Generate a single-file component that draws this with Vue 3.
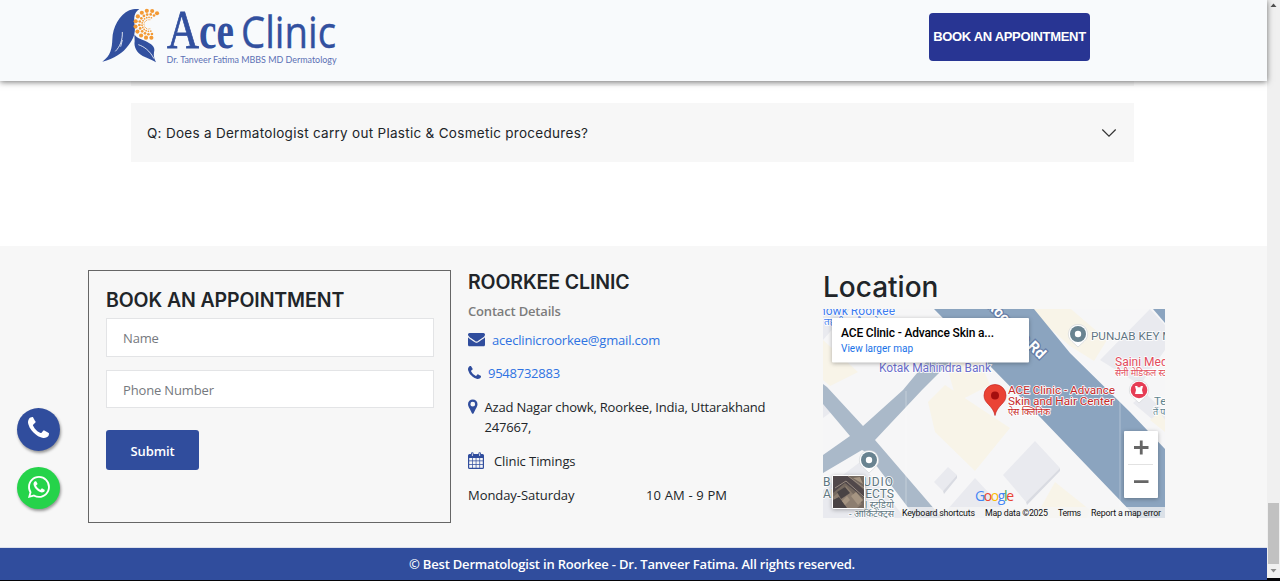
<script setup>
const ring = (count, cx, cy, radius, size, from, to) =>
  Array.from({ length: count }, (_, i) => {
    const a = ((from + ((to - from) * i) / (count - 1)) * Math.PI) / 180
    return { x: cx + radius * Math.cos(a), y: cy + radius * Math.sin(a), r: size }
  })

const dots = [
  ...ring(11, 177, 73, 41, 6.2, -54, -280),
  ...ring(12, 178, 73, 30, 4, -62, -285),
  ...ring(12, 177, 73, 21, 2.6, -70, -285),
  ...ring(11, 176, 73, 14, 1.6, -75, -285),
]

const phone =
  'M1408 1240q0 27-10 70.5t-21 68.5q-21 50-122 106-94 51-186 51-27 0-53-3.5t-57.5-12.5-47-14.5-55.5-20.5-49-18q-98-35-175-83-127-79-264-216t-216-264q-48-77-83-175-3-9-18-49t-20.5-55.5-14.5-47-12.5-57.5-3.5-53q0-92 51-186 56-101 106-122 25-11 68.5-21t70.5-10q14 0 21 3 18 6 53 76 11 19 30 54t35 63.5 31 53.5q3 4 17.5 25t21.5 35.5 7 28.5q0 20-28.5 50t-62 55-62 53-28.5 46q0 9 5 22.5t8.5 20.5 14 24 11.5 19q76 137 174 235t235 174q2 1 19 11.5t24 14 20.5 8.5 22.5 5q18 0 46-28.5t53-62 55-62 50-28.5q14 0 28.5 7t35.5 21.5 25 17.5q25 15 53.5 31t63.5 35 54 30q70 35 76 53 3 7 3 21z'
const envelope =
  'M1792 710v794q0 66-47 113t-113 47h-1472q-66 0-113-47t-47-113v-794q44 49 101 87 362 246 497 345 57 42 92.5 65.5t94.5 48 110 24.5h2q51 0 110-24.5t94.5-48 92.5-65.5q170-123 498-345 57-39 100-87zm0-294q0 79-49 151t-122 123q-376 261-468 325-10 7-42.5 31t-54 38.5-52 32.5-57.5 27-50 9h-2q-23 0-50-9t-57.5-27-52-32.5-54-38.5-42.5-31q-91-64-262-182.5t-205-142.5q-62-42-117-115.5t-55-136.5q0-78 41.5-130t118.5-52h1472q65 0 112.5 47t47.5 113z'
</script>

<template>
  <div class="window">
    <div class="page">
      <header class="topbar">
        <svg class="logo" width="260" height="81" viewBox="0 0 260 81">
          <g transform="scale(.33333)">
            <path fill="#32509f" d="M37 185C62 168 66 145 67 118C68 82 88 45 118 31C127 27 138 26 148 27C132 38 131 52 134 76C137 100 130 118 116 135C106 148 98 157 83 166C70 174 55 181 37 185Z" />
            <path fill="none" stroke="#f8fafc" stroke-width="2.5" d="M97 96C98 120 90 140 76 154M97 120L92 140" />
            <path fill="#32509f" d="M133 103C141 116 157 119 172 126C190 135 196 145 192 157C190 167 193 177 198 187C185 178 172 175 158 168C139 158 131 140 134 124Z" />
            <path fill="none" stroke="#f8fafc" stroke-width="2.5" d="M145 134C163 140 179 152 192 176" />
            <circle v-for="(d, i) in dots" :key="i" :cx="d.x" :cy="d.y" :r="d.r" fill="#f39a35" />
          </g>
          <text y="48" class="ace"><tspan x="77" class="cap" textLength="32" lengthAdjust="spacingAndGlyphs">A</tspan><tspan x="109" textLength="35" lengthAdjust="spacingAndGlyphs">ce</tspan></text>
          <text x="151" y="48" class="clinic" textLength="95" lengthAdjust="spacingAndGlyphs">Clinic</text>
          <text x="76.500" y="62.500" class="tagline" textLength="170" lengthAdjust="spacingAndGlyphs">Dr. Tanveer Fatima MBBS MD Dermatology</text>
        </svg>
        <button class="book">BOOK AN APPOINTMENT</button>
      </header>

      <main class="faq">
        <div class="faq-prev"></div>
        <div class="faq-item">
          <span>Q: Does a Dermatologist carry out Plastic &amp; Cosmetic procedures?</span>
          <svg width="16" height="16" viewBox="0 0 16 16"><path d="M1.300 4.500L8 11.200L14.700 4.500" fill="none" stroke="#333" stroke-width="1.200" /></svg>
        </div>
      </main>

      <section class="footer">
        <form class="form" @submit.prevent>
          <h3>BOOK AN APPOINTMENT</h3>
          <input placeholder="Name" />
          <input class="tel" placeholder="Phone Number" />
          <button>Submit</button>
        </form>

        <div class="contact">
          <h3>ROORKEE CLINIC</h3>
          <p class="sub">Contact Details</p>
          <p class="row mail">
            <svg width="17" height="13.400" viewBox="0 256 1792 1408"><path :d="envelope" /></svg>
            <a>aceclinicroorkee@gmail.com</a>
          </p>
          <p class="row tel-row">
            <svg width="13" height="13" viewBox="0 128 1408 1408"><path :d="phone" /></svg>
            <a>9548732883</a>
          </p>
          <div class="row address">
            <svg width="9.500" height="15" viewBox="0 0 10 15"><path fill-rule="evenodd" d="M5 0A5 5 0 0 1 10 5C10 7 8.800 8.500 8.200 9.900L5.900 14.500Q5 15.600 4.100 14.500L1.800 9.900C1.200 8.500 0 7 0 5A5 5 0 0 1 5 0ZM5 2.500A2.500 2.500 0 1 0 5 7.500A2.500 2.500 0 1 0 5 2.500Z" /></svg>
            <span>Azad Nagar chowk, Roorkee, India, Uttarakhand<br />247667,</span>
          </div>
          <p class="row timing">
            <svg width="16" height="17" viewBox="0 0 16 17"><path fill-rule="evenodd" d="M1.500 2H3V1.500Q3 .2 4.300 .2T5.600 1.500V2H10.400V1.500Q10.400 .2 11.700 .2T13 1.500V2H14.500Q16 2 16 3.500V15.500Q16 17 14.500 17H1.500Q0 17 0 15.500V3.500Q0 2 1.500 2ZM1.200 6V8.400H4V6ZM4.700 6V8.400H7.700V6ZM8.400 6V8.400H11.400V6ZM12.100 6V8.400H14.800V6ZM1.200 9.200V12H4V9.200ZM4.700 9.200V12H7.700V9.200ZM8.400 9.200V12H11.400V9.200ZM12.100 9.200V12H14.800V9.200ZM1.200 12.800V15.800H4V12.800ZM4.700 12.800V15.800H7.700V12.800ZM8.400 12.800V15.800H11.400V12.800ZM12.100 12.800V15.800H14.800V12.800ZM3.900 1.200V4H4.700V1.200ZM11.300 1.200V4H12.100V1.200Z" /></svg>
            <span>Clinic Timings</span>
          </p>
          <div class="hours"><span>Monday-Saturday</span><span class="time">10 AM - 9 PM</span></div>
        </div>

        <div class="location">
          <h2>Location</h2>
          <svg class="map" width="342" height="209" viewBox="823 309 342 209">
            <rect x="823" y="309" width="342" height="209" fill="#f6f6f7" />
            <path fill="#e9eaef" d="M823 309H850L823 340ZM1100 360L1150 309L1165 325V350L1140 385ZM1003 475L1035 441L1060 468L1026 502ZM934 482L948 467L957 475L943 491ZM940 518L975 478L1012 518ZM823 400L834 410L823 418ZM823 490L860 462L905 518H823ZM1133 403L1145 393L1165 412V430Z" />
            <path fill="#d9dbe2" d="M1026 502L1060 468V471L1027 505ZM943 491L957 475V478L944 494Z" />
            <path fill="#f8f4e8" d="M1028 309H1071L1107 340L1094 361L1070 346ZM823 340L858 372L830 386L823 380ZM928 402L945 385L1010 428L975 471L935 432ZM945 360L975 350L990 385L957 402ZM1055 482L1090 510L1087 518H1035ZM1150 420L1160 412L1165 420V432Z" />
            <path fill="#aab9c9" d="M823 384V404L850 436L823 455V473L862 450L866 452L916 518H942L875 440L922 390L985 327L970 309L903 390L863 426L827 387Z" />
            <path fill="#8ba4bf" d="M934 309H1034L1070 353L1130 412L1165 449V518H1137L1040 417L990 366Z" />
            <path fill="#8ba4bf" d="M1153 309H1165V323Z" />
            <path d="M906 391V518M1120 400V518" stroke="#fff" stroke-opacity=".45" stroke-width=".7" />
            <g class="map-text">
              <text class="road" transform="translate(986 306) rotate(45)" textLength="76">Roorkee Rd</text>
              <text x="819" y="314.500" fill="#3d7cf0" font-size="12" textLength="76">howk Roorkee</text>
              <text x="824" y="325" fill="#3d7cf0" font-size="9" textLength="60" lengthAdjust="spacingAndGlyphs">तहसील चौक रोड़</text>
              <text x="879" y="372" fill="#6b6ecb" font-size="12" textLength="112">Kotak Mahindra Bank</text>
              <text x="1091" y="339.500" fill="#5f7583" font-size="11.700">PUNJAB KEY MAKER</text>
              <text x="1115" y="366" fill="#e24b5b" font-size="12">Saini Medical</text>
              <text x="1115" y="376" fill="#e24b5b" font-size="9">सैनी मेडिकल स्टोर</text>
              <text x="1154" y="405" fill="#5f8490" font-size="11.500">Tehsil</text>
              <text x="1153" y="415" fill="#5f8490" font-size="9">तें पा</text>
              <g fill="#c62828">
                <text x="1008" y="393.500" font-size="11.800" textLength="107">ACE Clinic - Advance</text>
                <text x="1008" y="405" font-size="11.800" textLength="106">Skin and Hair Center</text>
                <text x="1008" y="415" font-size="9" textLength="42" lengthAdjust="spacingAndGlyphs">ऐस क्लिनिक</text>
              </g>
              <g fill="#607781">
                <text x="823" y="486" font-size="12" textLength="70">B S STUDIO</text>
                <text x="823" y="498" font-size="12" textLength="71" lengthAdjust="spacingAndGlyphs">ARCHITECTS</text>
                <text x="865" y="508" font-size="9" textLength="29" lengthAdjust="spacingAndGlyphs">| स्टूडियो</text>
                <text x="849" y="517" font-size="9" textLength="45" lengthAdjust="spacingAndGlyphs">- आर्किटेक्ट्स</text>
              </g>
            </g>
            <g v-for="p in [[1078, 334], [869, 460]]" :key="p[0]">
              <path :transform="`translate(${p[0]} ${p[1]})`" d="M0 -9.500A9.500 9.500 0 0 1 6 7.400L0 13L-6 7.400A9.500 9.500 0 0 1 0 -9.500Z" fill="#fff" stroke="#ccd0d4" stroke-width=".6" />
              <circle :cx="p[0]" :cy="p[1]" r="8" fill="#698390" />
              <circle :cx="p[0]" :cy="p[1]" r="3.200" fill="#fff" />
            </g>
            <path transform="translate(1139 390)" d="M0 -9.500A9.500 9.500 0 0 1 6 7.400L0 13L-6 7.400A9.500 9.500 0 0 1 0 -9.500Z" fill="#fff" stroke="#ccd0d4" stroke-width=".6" />
            <circle cx="1139" cy="390" r="8.300" fill="#e63d55" />
            <path d="M1135 386H1137.500V387.200H1140.500V386H1143L1142 390L1143 394H1135L1136 390Z" fill="#fff" />
            <path d="M995 384.500A11 11 0 0 1 1006 395.500C1006 404 997 405 995 415.500C993 405 984 404 984 395.500A11 11 0 0 1 995 384.500Z" fill="#ea4335" stroke="#c5221f" stroke-width=".7" />
            <circle cx="995" cy="395.500" r="4" fill="#a50e0e" />
            <rect x="902" y="507" width="263" height="11" fill="#f5f5f5" fill-opacity=".75" />
            <g class="map-text legal" fill="#111" font-size="8.800">
              <text x="902" y="515.500" textLength="73">Keyboard shortcuts</text>
              <text x="985" y="515.500" textLength="63">Map data ©2025</text>
              <text x="1058" y="515.500" textLength="23">Terms</text>
              <text x="1091" y="515.500" textLength="70">Report a map error</text>
            </g>
            <text class="google" x="975" y="501" textLength="39"><tspan fill="#4285f4">G</tspan><tspan fill="#ea4335">o</tspan><tspan fill="#fbbc04">o</tspan><tspan fill="#4285f4">g</tspan><tspan fill="#34a853">l</tspan><tspan fill="#ea4335">e</tspan></text>
            <g class="raised">
              <rect x="832" y="318" width="197" height="44.500" rx="1" fill="#fff" />
              <rect x="1124" y="431" width="34" height="67" rx="1" fill="#fff" />
              <rect x="832" y="475" width="33" height="34" rx="2" fill="#fff" />
            </g>
            <text class="card-title" x="841" y="337" textLength="153">ACE Clinic - Advance Skin a...</text>
            <text class="card-link" x="841" y="351.500" textLength="72">View larger map</text>
            <path d="M1134 447.500H1148.500M1141.250 440.500V454.500M1134 481.700H1148.500" stroke="#666" stroke-width="2.800" />
            <path d="M1128 464.500H1153" stroke="#e2e2e2" />
            <g transform="translate(833 476)">
              <rect width="31" height="32" fill="#75695f" />
              <path fill="#51484a" d="M0 0H15L31 14V22L12 7L0 17Z" />
              <path fill="#8d7e70" d="M0 21L13 10L29 28L24 32H4Z" />
              <path fill="#494344" d="M4 16L12 11L17 17L8 23ZM0 24L6 21L14 32H0Z" />
              <path fill="#a69582" d="M18 20L23 16L30 24L25 29ZM9 25L14 20L17 24L12 29ZM20 2L27 1L30 8Z" />
              <path stroke="#988b80" stroke-width="1" d="M2 12L13 5L31 21M15 0L31 12" fill="none" />
            </g>
          </svg>
        </div>
      </section>

      <div class="copyright"><span>© Best Dermatologist in Roorkee - Dr. Tanveer Fatima. All rights reserved.</span></div>
    </div>

    <div class="scrollbar">
      <svg width="13" height="14" viewBox="0 0 13 14"><path d="M3.500 7L6.500 3.500L9.500 7Z" fill="#505050" /></svg>
      <div class="thumb"></div>
      <svg width="13" height="14" viewBox="0 0 13 14"><path d="M3.500 5L6.500 8.500L9.500 5Z" fill="#8a8a8a" /></svg>
    </div>

    <div class="floating">
      <a class="fab call"><svg width="21" height="21" viewBox="0 128 1408 1408"><path :d="phone" fill="#fff" /></svg></a>
      <a class="fab whatsapp">
        <svg width="22" height="22" viewBox="0 0 16 16" fill="#fff">
          <path fill-rule="evenodd" d="M13.601 2.326A7.850 7.850 0 0 0 7.994 0C3.627 0 .068 3.558.064 7.926c0 1.399.366 2.760 1.057 3.965L0 16l4.204-1.102a7.900 7.900 0 0 0 3.790.965h.004c4.368 0 7.926-3.558 7.930-7.930A7.900 7.900 0 0 0 13.600 2.326zM7.994 14.521a6.600 6.600 0 0 1-3.356-.92l-.24-.144-2.494.654.666-2.433-.156-.251a6.560 6.560 0 0 1-1.007-3.505c0-3.626 2.957-6.584 6.591-6.584a6.560 6.560 0 0 1 4.660 1.931 6.560 6.560 0 0 1 1.928 4.660c-.004 3.639-2.961 6.592-6.592 6.592" />
          <path transform="translate(4 3.800) scale(.0058) translate(0 -128)" :d="phone" />
        </svg>
      </a>
    </div>
  </div>
</template>

<style>
body {
  margin: 0;
  overflow: hidden;
}
</style>

<style scoped>
* {
  box-sizing: border-box;
}
.window {
  position: relative;
  display: flex;
  width: 1280px;
  height: 581px;
  overflow: hidden;
  background: #fff;
  color: #212529;
  font-family: "Open Sans", "Noto Sans", sans-serif;
  font-size: 13px;
}
.page {
  display: flex;
  flex-direction: column;
  width: 1267px;
  border-bottom: 3px solid #050508;
}
h2,
h3,
p {
  margin: 0;
}
.topbar {
  position: relative;
  z-index: 1;
  display: flex;
  justify-content: space-between;
  flex: 0 0 81px;
  padding: 0 177px 0 90px;
  background: #f8fafc;
  box-shadow: 0 1px 6px rgba(0, 0, 0, 0.55);
}
.ace {
  font: bold 52px "Liberation Serif", serif;
  fill: #32509f;
}
.ace .cap {
  font-size: 55px;
  font-weight: 400;
  stroke: #32509f;
  stroke-width: 0.8px;
}
.clinic {
  font: 44px "Open Sans", sans-serif;
  fill: #32509f;
  stroke: #32509f;
  stroke-width: 0.4px;
}
.tagline {
  font: 10px Lato, sans-serif;
  fill: #5b70b4;
}
.book {
  width: 161px;
  height: 48px;
  margin-top: 13px;
  padding: 0 0 1px;
  border: 0;
  border-radius: 4px;
  background: #283593;
  color: #fff;
  font: bold 13px "Liberation Sans", sans-serif;
  letter-spacing: -0.32px;
  white-space: nowrap;
}
.faq {
  flex: 0 0 165px;
  padding: 0 133px 0 131px;
}
.faq-prev {
  height: 5px;
  background: #f7f7f7;
}
.faq-item {
  display: flex;
  align-items: center;
  justify-content: space-between;
  height: 59px;
  margin-top: 17px;
  padding: 0 17px 0 16px;
  background: #f7f7f7;
  font: 13.500px Inter, sans-serif;
  letter-spacing: 0.29px;
}
.footer {
  display: grid;
  grid-template-columns: 363px 338px 342px;
  column-gap: 17px;
  flex: 0 0 302px;
  padding: 24px 0 0 88px;
  background: #f7f7f7;
  border-bottom: 1px solid #dde1ec;
}
h3 {
  font: 600 19.500px/24px Inter, sans-serif;
  letter-spacing: -0.11px;
  white-space: nowrap;
}
.form {
  display: flex;
  flex-direction: column;
  align-items: flex-start;
  height: 253px;
  padding: 17px 16px 0 17px;
  border: 1px solid #666;
}
.form h3 {
  height: 30px;
}
.form input {
  width: 328px;
  height: 39px;
  padding: 1px 16px 0;
  border: 1px solid #e3e4e6;
  border-radius: 0;
  background: #fff;
  font: 13px "Open Sans", sans-serif;
  letter-spacing: -0.15px;
}
.form input::placeholder {
  color: #75797e;
  opacity: 1;
}
.form .tel {
  height: 38px;
  margin-top: 13px;
}
.form button {
  width: 93px;
  height: 40px;
  margin-top: 22px;
  padding: 2px 0 0;
  border: 0;
  border-radius: 3px;
  background: #304d9d;
  color: #fff;
  font: 600 13px "Open Sans", sans-serif;
  letter-spacing: -0.1px;
}
.contact {
  letter-spacing: -0.18px;
}
.contact h3 {
  height: 25px;
  line-height: 25px;
}
.contact svg {
  flex: none;
  fill: #304d9d;
}
.sub {
  height: 32px;
  line-height: 33px;
  color: #7c7c7c;
  font-weight: 600;
}
.row {
  display: flex;
  align-items: center;
}
.row a {
  color: #2e73e2;
}
.mail {
  height: 26px;
  gap: 7px;
}
.tel-row {
  height: 40px;
  gap: 7px;
}
.tel-row svg {
  margin-bottom: 2px;
}
.tel-row a {
  letter-spacing: -0.25px;
}
.address {
  align-items: flex-start;
  margin-top: 4px;
  height: 40px;
  gap: 7px;
  line-height: 20px;
  white-space: nowrap;
}
.address svg {
  margin-top: 2px;
}
.timing {
  height: 48px;
  gap: 10px;
  letter-spacing: -0.08px;
}
.timing svg {
  margin-bottom: 2px;
}
.hours {
  display: grid;
  grid-template-columns: 178px 1fr;
  height: 20px;
  line-height: 20px;
  letter-spacing: -0.06px;
}
.hours .time {
  letter-spacing: 0.15px;
}
.location h2 {
  height: 39px;
  font: 500 28px/34px Inter, sans-serif;
}
.map {
  display: block;
}
.map-text {
  font-family: Roboto, "Noto Sans", sans-serif;
}
.map-text:not(.legal) text {
  paint-order: stroke;
  stroke: #fff;
  stroke-width: 1.500px;
}
.map-text:not(.legal) .road {
  font-size: 15px;
  font-weight: 700;
  fill: #fff;
  stroke: #667ea8;
  stroke-width: 2.500px;
}
.google {
  font: 500 14px "Open Sans", sans-serif;
}
.raised {
  filter: drop-shadow(0 1px 2px rgba(0, 0, 0, 0.3));
}
.card-title {
  font: 500 12px Roboto, sans-serif;
}
.card-link {
  font: 10px Roboto, sans-serif;
  fill: #1a73e8;
}
.copyright {
  flex: 0 0 30px;
  line-height: 32px;
  padding-right: 3px;
  background: #304d9d;
  color: #fff;
  text-align: center;
  font-weight: 600;
  letter-spacing: -0.19px;
}
.scrollbar {
  display: flex;
  flex-direction: column;
  width: 13px;
  background: #f0f0f0;
  border-bottom: 3px solid #050508;
}
.thumb {
  height: 61px;
  margin: auto 1px 0;
  background: #c1c1c1;
}
.floating {
  position: absolute;
  left: 17px;
  top: 408px;
  display: flex;
  flex-direction: column;
  gap: 16px;
}
.fab {
  display: flex;
  align-items: center;
  justify-content: center;
  width: 43px;
  height: 43px;
  border-radius: 50%;
  box-shadow: 1px 2px 3px rgba(0, 0, 0, 0.4);
}
.call {
  background: #304d9d;
}
.call svg {
  margin-top: -4px;
}
.whatsapp {
  height: 42px;
  background: #25d34a;
}
.whatsapp svg {
  margin-top: -3px;
}
</style>
